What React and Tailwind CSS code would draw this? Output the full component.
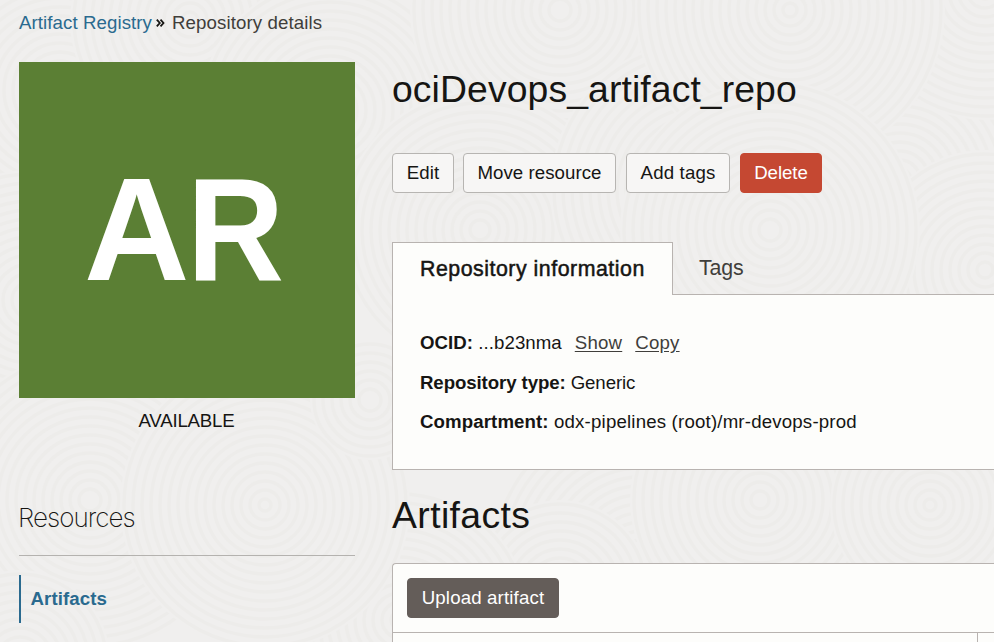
const SWIRLS = [
  [60, 90, 150], [190, 20, 120], [900, 180, 150], [330, 110, 130], [985, 270, 120], [560, 10, 150],
  [480, 230, 140], [700, 190, 150], [30, 300, 130], [985, -10, 130], [790, 10, 155],
  [900, 620, 130], [770, 230, 150], [640, 560, 150], [560, 590, 90], [400, 620, 130],
  [90, 500, 150], [265, 505, 145], [370, 400, 60], [760, 500, 130], [930, 505, 100], [20, 660, 90],
]

function Swirl({ x, y, r }) {
  const rings = []
  for (let k = r - 4; k > 4; k -= 9) rings.push(k)
  return (
    <g>
      <circle cx={x} cy={y} r={r} fill="#f0efee" stroke="none" />
      {rings.map((k) => (
        <circle key={k} cx={x} cy={y} r={k} fill="none" stroke="#edecea" strokeWidth="3.4" />
      ))}
    </g>
  )
}

function Backdrop() {
  return (
    <svg className="absolute inset-0 -z-10" width="994" height="642" viewBox="0 0 994 642" aria-hidden="true">
      {SWIRLS.map(([x, y, r], i) => (
        <Swirl key={i} x={x} y={y} r={r} />
      ))}
    </svg>
  )
}

function ActionButton({ className, children }) {
  return (
    <button className={`h-10 shrink-0 rounded-[4px] border leading-[38px] whitespace-nowrap ${className}`}>
      {children}
    </button>
  )
}

function Field({ label, className = '', children }) {
  return (
    <div className={`flex h-[39.5px] items-center whitespace-pre ${className}`}>
      <span className="font-bold">{label}</span>
      {children}
    </div>
  )
}

function Sidebar() {
  return (
    <aside className="w-[336px] shrink-0">
      <div className="flex h-[336px] items-center bg-[#5b7f34] pl-[65px] text-[146px] leading-none font-bold text-white">
        <span className="tracking-[-2.5px]">A</span>
        <span className="origin-left scale-x-[0.92]">R</span>
      </div>
      <div className="mt-[9px] pr-px text-center leading-7 tracking-[-0.2px]">AVAILABLE</div>
      <h2 className="mt-[67px] -ml-px h-[53px] font-[Inter] text-[26px] leading-8 font-extralight tracking-[-0.95px]">
        Resources
      </h2>
      <div className="border-t border-[#b4b2af]" />
      <div className="mt-[19px] flex h-12 items-center border-l-2 border-[#2a6a8f] pl-[9.5px] font-bold text-[#2a6a8f]">
        Artifacts
      </div>
    </aside>
  )
}

function Main() {
  return (
    <main className="w-[620px] shrink-0">
      <h1 className="mt-[3px] h-[88px] text-[37.33px] leading-[48px] tracking-[0.1px]">ociDevops_artifact_repo</h1>
      <div className="flex tracking-[0.05px]">
        <ActionButton className="w-[62px] border-[#b7b5b2] bg-[#f7f6f5]">Edit</ActionButton>
        <ActionButton className="ml-[9px] w-[153px] border-[#b7b5b2] bg-[#f7f6f5]">Move resource</ActionButton>
        <ActionButton className="ml-[10px] w-[104px] border-[#b7b5b2] bg-[#f7f6f5] tracking-[0.15px]">Add tags</ActionButton>
        <ActionButton className="ml-[10px] w-[82px] border-[#c54832] bg-[#c54832] tracking-[-0.05px] text-white">Delete</ActionButton>
      </div>
      <div className="mt-[49px] flex h-[53px] text-[21.33px]">
        <div className="w-[281px] border-x border-t border-[#b8b3b0] bg-[#fdfdfb] pt-3 pl-[27px] leading-7 tracking-[0.52px] whitespace-nowrap [-webkit-text-stroke:0.5px]">
          Repository information
        </div>
        <div className="flex-1 border-b border-[#b8b3b0] pt-3 pl-[26px] leading-7 tracking-[-0.1px] text-[#403e3b]">Tags</div>
      </div>
      <section className="h-[175px] border-b border-l border-[#b8b3b0] bg-[#fdfdfb] pt-7 pl-[27px]">
        <Field label="OCID: " className="tracking-[0.05px]">
          <span>...b23nma</span>
          <a className="ml-[13px] tracking-[0.2px] text-[#403e3b] underline underline-offset-2">Show</a>
          <a className="ml-[13px] tracking-[0.2px] text-[#403e3b] underline underline-offset-2">Copy</a>
        </Field>
        <Field label="Repository type: " className="pt-px tracking-[-0.1px]">Generic</Field>
        <Field label="Compartment: ">
          <span className="tracking-[0.18px]">odx-pipelines (root)/mr-devops-prod</span>
        </Field>
      </section>
      <h1 className="mt-[21px] h-[72px] text-[37.33px] leading-[48px] tracking-[0.4px]">Artifacts</h1>
      <section className="rounded-tl-[4px] border-t border-l border-[#b8b3b0] bg-[#fdfdfb]">
        <div className="h-[68px] pt-[14px] pl-[14px]">
          <ActionButton className="w-[152px] border-[#645d59] bg-[#645d59] tracking-[0.15px] text-white">Upload artifact</ActionButton>
        </div>
        <div className="flex h-[20px] border-t border-[#b8b3b0]">
          <div className="w-[585px] border-r border-[#b8b3b0]" />
        </div>
      </section>
    </main>
  )
}

export default function App() {
  return (
    <div className="relative isolate h-[642px] w-[994px] overflow-hidden bg-[#f0efee] pl-[19px] font-['Liberation_Sans',Arial,sans-serif] text-[18.67px] tracking-[0.1px] text-[#161513]">
      <Backdrop />
      <nav className="flex h-[62px] items-start pt-[9px] leading-7 whitespace-nowrap">
        <a className="tracking-[0.08px] text-[#2a6a8f]">Artifact Registry</a>
        <svg className="mt-[10px] ml-[4px]" width="9" height="8" viewBox="0 0 9 8" fill="none" stroke="#161513" strokeWidth="1.8" aria-hidden="true">
          <path d="M0.8 0.6 3.8 4 0.8 7.4M4.5 0.6 7.5 4 4.5 7.4" />
        </svg>
        <span className="ml-[7px] tracking-[0.1px] text-[#403e3b]">Repository details</span>
      </nav>
      <div className="flex gap-[37px]">
        <Sidebar />
        <Main />
      </div>
    </div>
  )
}
